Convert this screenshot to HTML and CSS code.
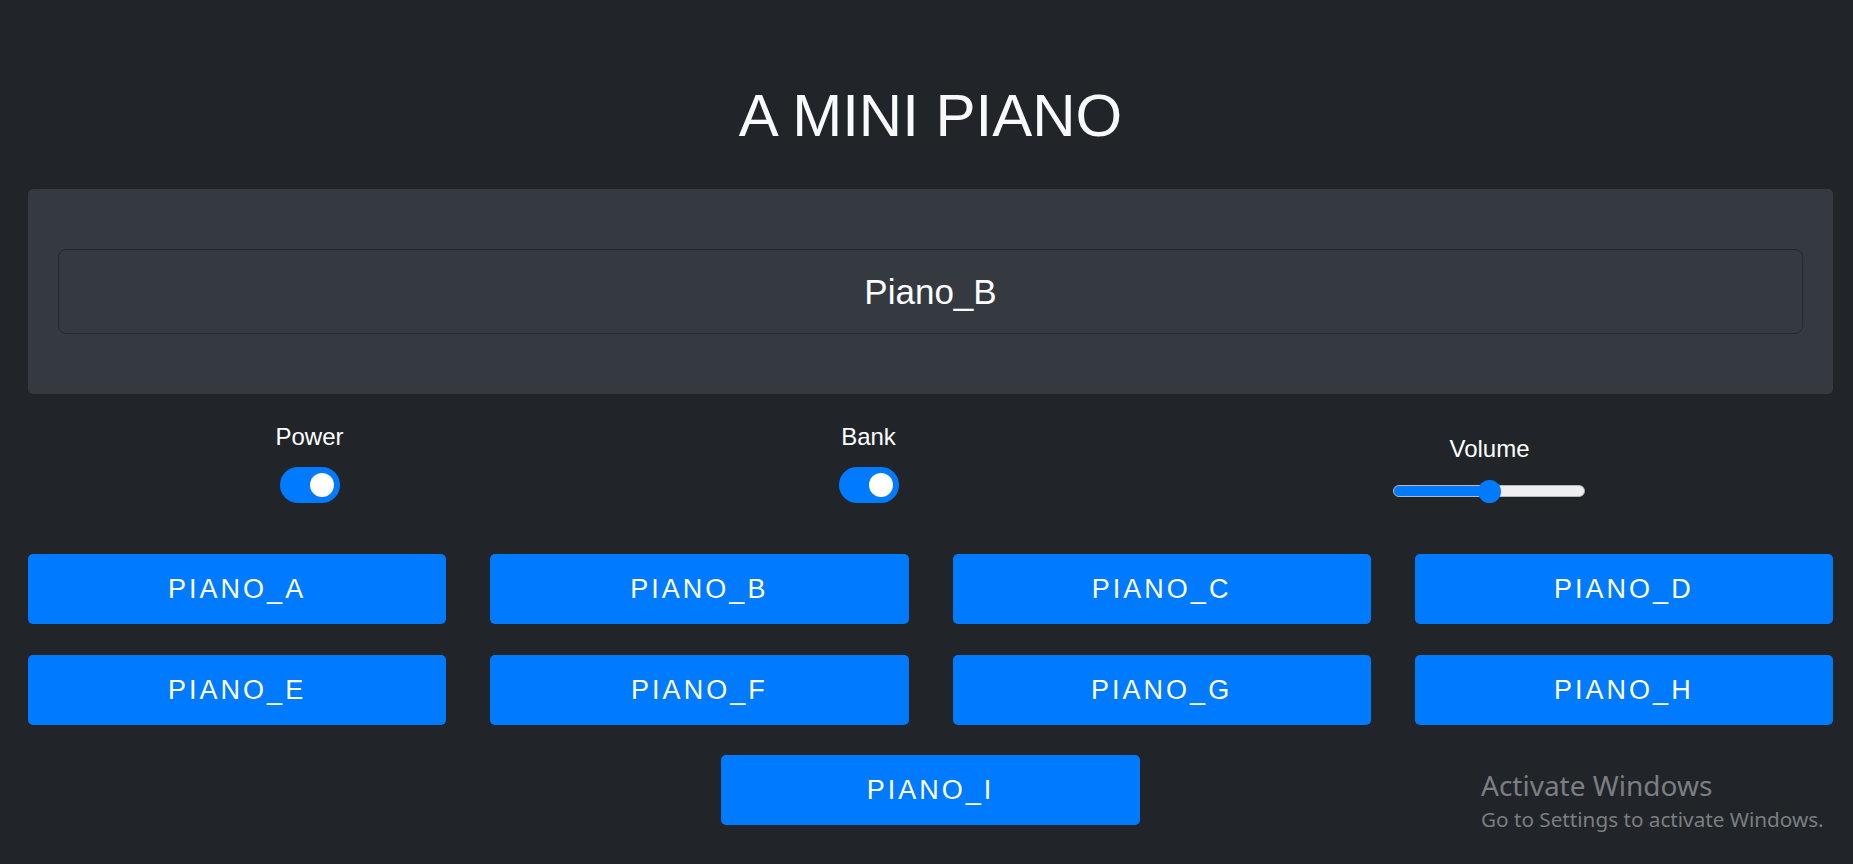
FILE: index.html
```html
<!DOCTYPE html>
<html lang="en">
<head>
<meta charset="utf-8">
<title>A Mini Piano</title>
<link rel="stylesheet" href="styles.css">
</head>
<body>
<div class="app">
  <h1 class="title">A MINI PIANO</h1>
  <div class="panel">
    <div class="display">Piano_B</div>
  </div>
  <div class="controls">
    <div class="control">
      <div class="control-label">Power</div>
      <div class="toggle"><span class="knob"></span></div>
    </div>
    <div class="control">
      <div class="control-label">Bank</div>
      <div class="toggle"><span class="knob"></span></div>
    </div>
    <div class="control control-volume">
      <div class="control-label volume-label">Volume</div>
      <input class="volume" type="range" min="0" max="1" step="0.01" value="0.5">
    </div>
  </div>
  <div class="pads">
    <button class="pad">PIANO_A</button>
    <button class="pad">PIANO_B</button>
    <button class="pad">PIANO_C</button>
    <button class="pad">PIANO_D</button>
    <button class="pad">PIANO_E</button>
    <button class="pad">PIANO_F</button>
    <button class="pad">PIANO_G</button>
    <button class="pad">PIANO_H</button>
  </div>
  <div class="pads-last">
    <button class="pad pad-single">PIANO_I</button>
  </div>
</div>
<div class="watermark">
  <div class="wm-title">Activate Windows</div>
  <div class="wm-sub">Go to Settings to activate Windows.</div>
</div>
</body>
</html>
```
FILE: styles.css
```css
* { box-sizing: border-box; }
html, body {
  margin: 0;
  height: 100%;
  background: #212529;
  overflow: hidden;
}
body {
  font-family: "Liberation Sans", Arial, sans-serif;
  color: #fff;
}
.app {
  padding: 80px 20px 0 28px;
}
.title {
  margin: 0 0 37px;
  font-size: 60px;
  line-height: 72px;
  font-weight: 400;
  text-align: center;
  color: #f8f9fa;
}
.panel {
  background: #343a40;
  border-radius: 5px;
  padding: 60px 30px 60px;
}
.display {
  height: 85px;
  border: 1px solid #25292d;
  border-radius: 8px;
  display: flex;
  align-items: center;
  justify-content: center;
  font-size: 35px;
  color: #fff;
}
.controls {
  margin-top: 28px;
  display: flex;
  justify-content: space-around;
  align-items: flex-start;
}
.control {
  display: flex;
  flex-direction: column;
  align-items: center;
}
.control-label {
  font-size: 24px;
  line-height: 29px;
  color: #fff;
}
.toggle {
  margin-top: 16px;
  width: 60px;
  height: 36px;
  border-radius: 18px;
  background: #007bff;
  position: relative;
}
.knob {
  position: absolute;
  top: 6px;
  right: 6px;
  width: 24px;
  height: 24px;
  border-radius: 50%;
  background: #fff;
}
.control-volume {
  padding-top: 12px;
}
.volume-label {
  margin-bottom: 22px;
}
.volume {
  -webkit-appearance: none;
  appearance: none;
  width: 192px;
  height: 12px;
  margin: 0;
  border-radius: 6px;
  border: 1px solid #b8b8b8;
  background: linear-gradient(to right, #007bff 0, #007bff 50%, #efefef 50%, #efefef 100%);
  outline: none;
}
.volume::-webkit-slider-runnable-track {
  height: 10px;
  background: transparent;
}
.volume::-webkit-slider-thumb {
  -webkit-appearance: none;
  appearance: none;
  width: 23px;
  height: 23px;
  margin-top: -6.5px;
  border-radius: 50%;
  background: #007bff;
  border: none;
}
.pads {
  margin-top: 51px;
  display: grid;
  grid-template-columns: repeat(4, 1fr);
  column-gap: 44px;
  row-gap: 31px;
}
.pad {
  height: 70px;
  border: none;
  border-radius: 5px;
  background: #007bff;
  color: #fff;
  font-family: "Liberation Sans", Arial, sans-serif;
  font-size: 27px;
  letter-spacing: 3px;
  padding: 0;
  cursor: pointer;
}
.pads-last {
  margin-top: 30px;
  display: flex;
  justify-content: center;
}
.pad-single {
  width: calc((100% - 132px) / 4);
}
.watermark {
  position: absolute;
  left: 1481px;
  top: 765px;
  color: #7b7e82;
  font-family: "Noto Sans", "Open Sans", sans-serif;
  pointer-events: none;
}
.wm-title {
  font-size: 28px;
  line-height: 40px;
}
.wm-sub {
  font-size: 20.7px;
  line-height: 28px;
}
```
